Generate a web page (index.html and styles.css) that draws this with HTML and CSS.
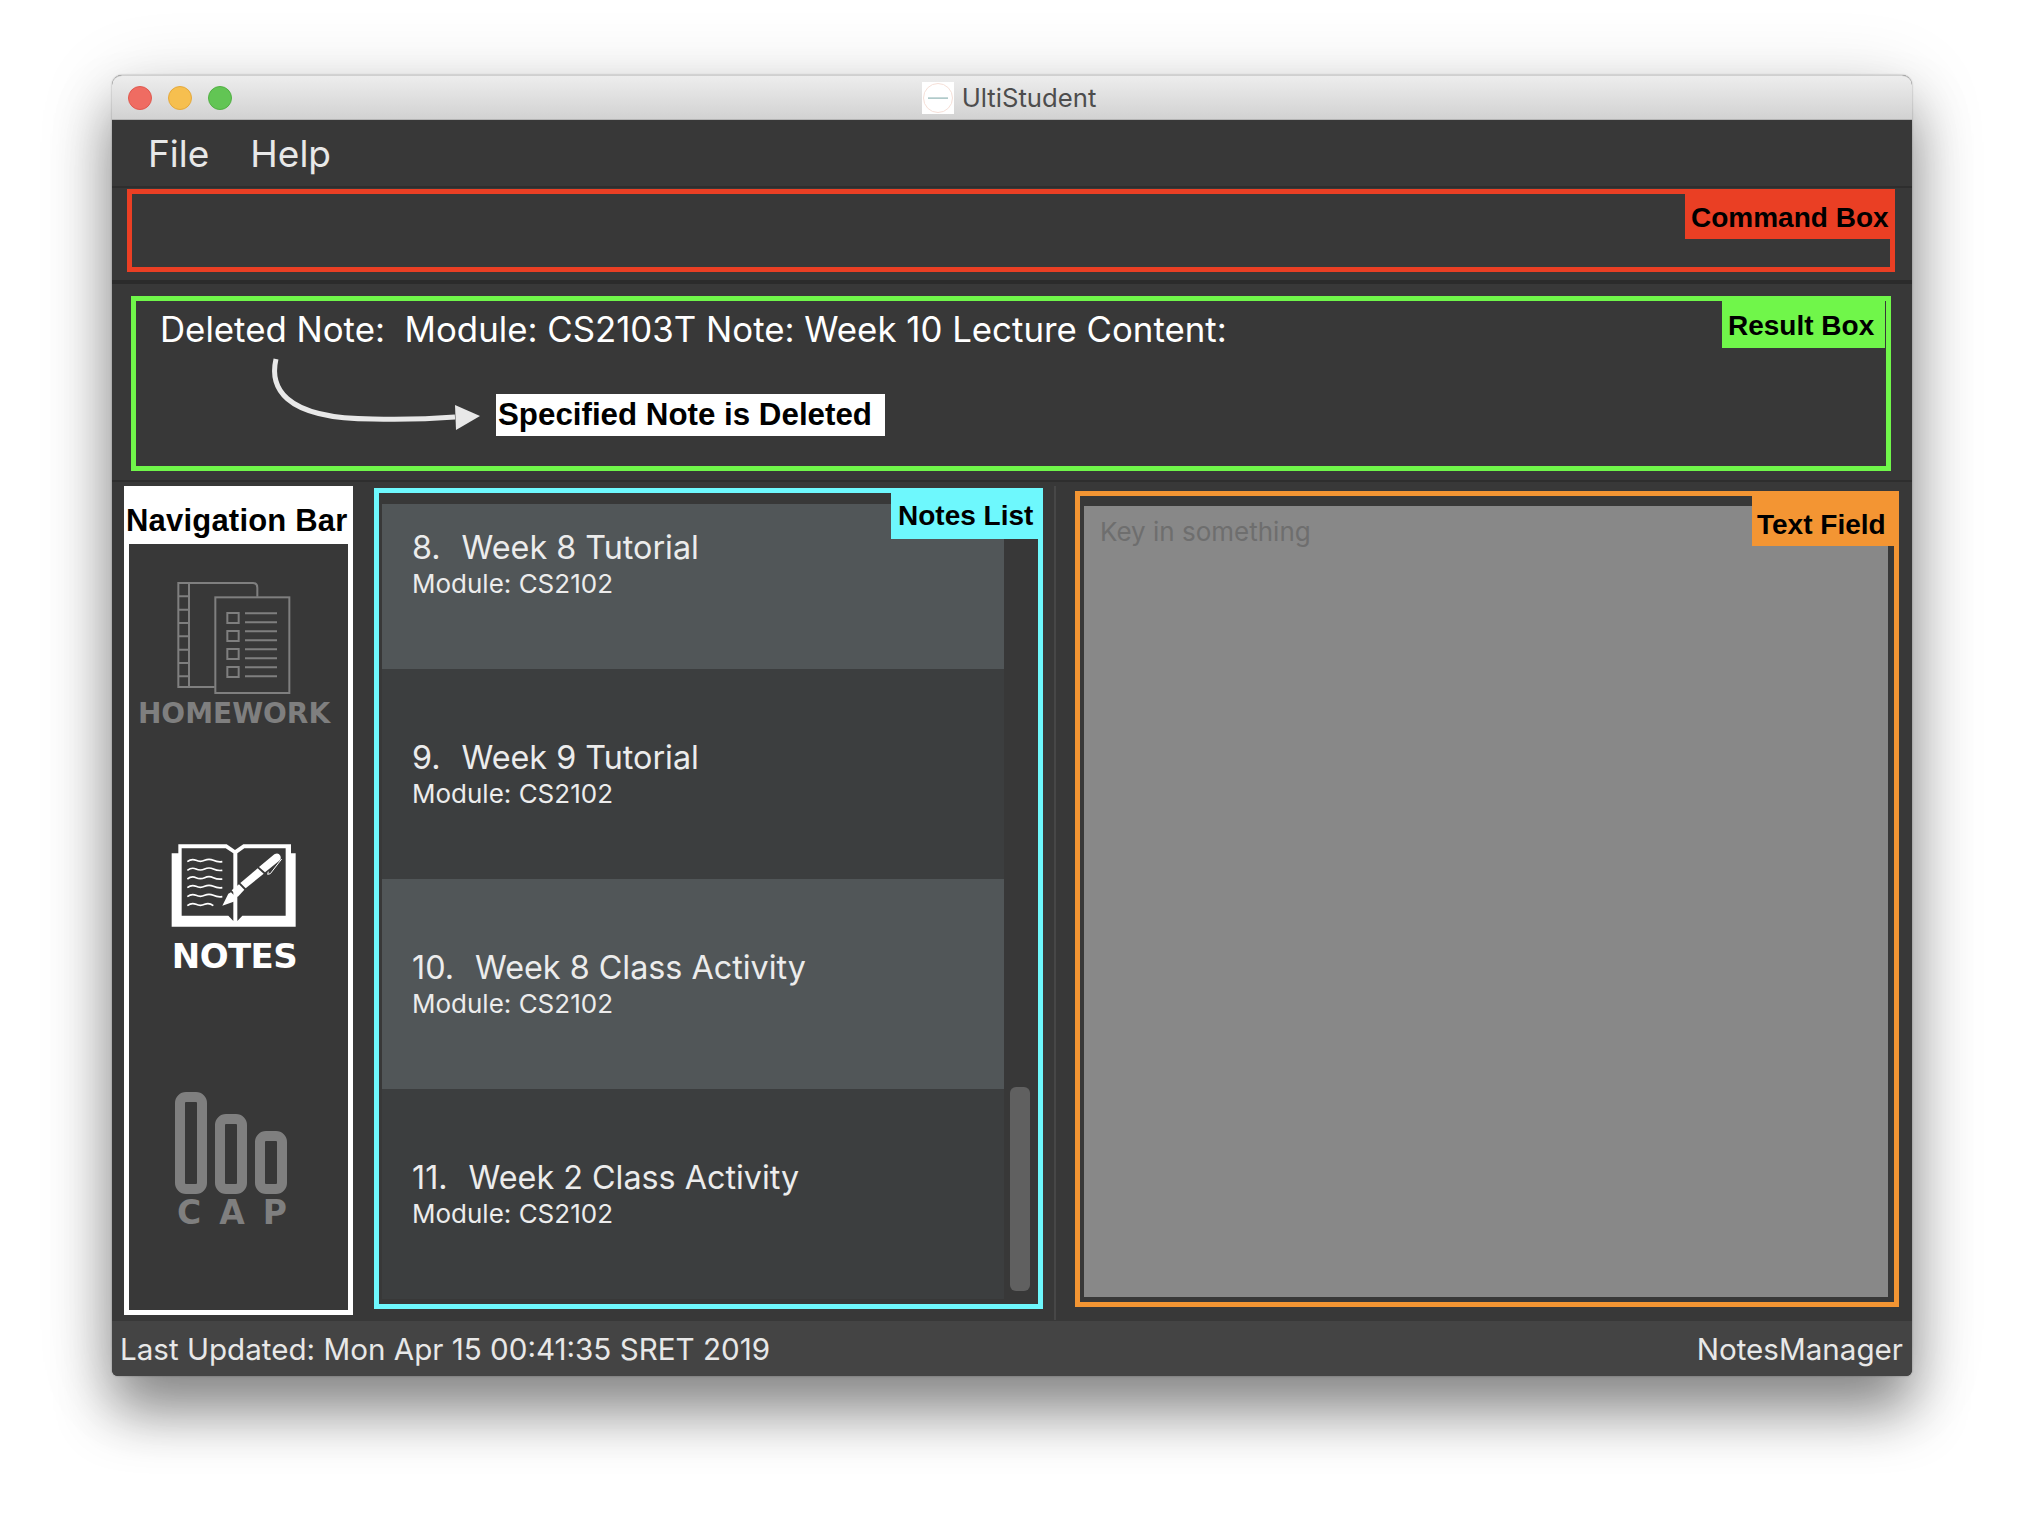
FILE: index.html
```html
<!DOCTYPE html>
<html lang="en">
<head>
    <meta charset="UTF-8">
    <title>UltiStudent</title>
    <link rel="stylesheet" href="styles.css">
</head>
<body>
    <div class="window">
        <div class="titlebar">
            <div class="lights">
                <span class="light red"></span>
                <span class="light yellow"></span>
                <span class="light green"></span>
            </div>
            <svg class="app-icon" viewBox="0 0 32 32">
                <rect width="32" height="32" fill="#fff"/>
                <circle cx="16" cy="16" r="14.5" fill="none" stroke="#f6e0d8" stroke-width="1"/>
                <rect x="6" y="15.5" width="20" height="1.2" fill="#8fb4b4"/>
            </svg>
            <span class="app-title">UltiStudent</span>
        </div>

        <div class="menubar">
            <span class="menu-item">File</span>
            <span class="menu-item">Help</span>
        </div>

        <div class="command-pane">
            <div class="box command-box">
                <span class="tag tag-command">Command Box</span>
            </div>
        </div>

        <div class="result-pane">
            <div class="box result-box">
                <div class="result-text">Deleted Note:&nbsp; Module: CS2103T Note: Week 10 Lecture Content:</div>
                <span class="tag tag-result">Result Box</span>
                <!-- annotation arrow -->
                <svg class="arrow" viewBox="0 0 230 90">
                    <path d="M10 4C4 30 14 64 107 64Q150 65 189 62" fill="none" stroke="#e8e8e8" stroke-width="5"/>
                    <polygon points="189,50 214,61 190,75" fill="#e8e8e8"/>
                </svg>
                <span class="callout">Specified Note is Deleted</span>
            </div>
        </div>

        <div class="main">
            <div class="nav">
                <div class="nav-head">Navigation Bar</div>
                <div class="nav-body">
                    <div class="nav-item item-homework">
                        <svg class="icon-homework" viewBox="200 300 342 342">
                            <g fill="none" stroke="#7f7f7f" stroke-width="6">
                                <path d="M313 618H204V306H428Q441 306 441 320V347"/>
                                <path d="M236 306V618M204 346H236M204 386H236M204 426H236M204 466H236M204 506H236M204 546H236M204 586H236"/>
                                <rect x="315" y="349" width="222" height="287"/>
                                <rect x="351" y="396" width="34" height="30"/>
                                <rect x="351" y="450" width="34" height="30"/>
                                <rect x="351" y="504" width="34" height="30"/>
                                <rect x="351" y="558" width="34" height="30"/>
                                <path d="M404 397H500M404 424H500M404 451H500M404 478H500M404 505H500M404 532H500M404 559H500M404 586H500"/>
                            </g>
                        </svg>
                        <span class="nav-label label-homework">HOMEWORK</span>
                    </div>
                    <div class="nav-item item-notes">
                        <svg class="icon-notes" viewBox="0 0 420 300">
                            <path d="M20 55H40V28H185L210 45L235 28H378V55H392V275H20Z" fill="#fff"/>
                            <path d="M50 40H182L205 55V258L190 242H50Z" fill="#383838"/>
                            <path d="M217 55L238 40H362V242H232L217 258Z" fill="#383838"/>
                            <g fill="none" stroke="#fff" stroke-width="5">
                                <path d="M67 80Q80 70 93 76T119 76T145 76T172 80"/>
                                <path d="M67 106Q80 96 93 102T119 102T145 102T172 106"/>
                                <path d="M67 132Q80 122 93 128T119 128T145 128T172 132"/>
                                <path d="M67 158Q80 148 93 154T119 154T145 154T172 158"/>
                                <path d="M67 185Q80 175 93 181T119 181T145 181T172 185"/>
                                <path d="M67 212Q80 202 93 208T119 208T145 212"/>
                            </g>
                            <polygon points="172,212 190,176 198,172 216,190 212,198" fill="#fff"/>
                            <polygon points="200,166 222,148 238,164 218,186" fill="#fff"/>
                            <polygon points="226,144 278,100 296,116 242,160" fill="#fff"/>
                            <path d="M282 96L328 58Q340 52 346 62Q350 72 342 78L300 112Z" fill="#fff"/>
                            <path d="M350 72L316 116L308 118L310 110" fill="none" stroke="#fff" stroke-width="3"/>
                        </svg>
                        <span class="nav-label label-notes">NOTES</span>
                    </div>
                    <div class="nav-item item-cap">
                        <svg class="icon-cap" viewBox="0 0 114 102">
                            <g fill="none" stroke="#7f7f7f" stroke-width="10">
                                <rect x="5" y="5" width="22" height="92" rx="6"/>
                                <rect x="45" y="27" width="22" height="70" rx="6"/>
                                <rect x="85" y="44" width="22" height="53" rx="6"/>
                            </g>
                        </svg>
                        <span class="nav-label label-cap">CAP</span>
                    </div>
                </div>
            </div>

            <div class="box notes-box">
                <div class="notes-list">
                    <div class="note-cell alt first">
                        <div class="note-title"><span class="note-num">8.</span>Week 8 Tutorial</div>
                        <div class="note-module">Module: CS2102</div>
                    </div>
                    <div class="note-cell">
                        <div class="note-title"><span class="note-num">9.</span>Week 9 Tutorial</div>
                        <div class="note-module">Module: CS2102</div>
                    </div>
                    <div class="note-cell alt">
                        <div class="note-title"><span class="note-num">10.</span>Week 8 Class Activity</div>
                        <div class="note-module">Module: CS2102</div>
                    </div>
                    <div class="note-cell">
                        <div class="note-title"><span class="note-num">11.</span>Week 2 Class Activity</div>
                        <div class="note-module">Module: CS2102</div>
                    </div>
                </div>
                <div class="scroll-track"><div class="scroll-thumb"></div></div>
                <span class="tag tag-notes">Notes List</span>
            </div>

            <div class="divider"></div>

            <div class="box text-box">
                <div class="text-area">Key in something</div>
                <span class="tag tag-text">Text Field</span>
            </div>
        </div>

        <div class="statusbar">
            <span>Last Updated: Mon Apr 15 00:41:35 SRET 2019</span>
            <span>NotesManager</span>
        </div>
    </div>
</body>
</html>
```

FILE: styles.css
```css
body {
    margin: 0;
    width: 2024px;
    height: 1524px;
    box-sizing: border-box;
    padding: 75px 0 0 112px;
    background: #fff;
    font-family: Inter, "Noto Sans", sans-serif;
}
.window {
    width: 1800px;
    height: 1301px;
    display: flex;
    flex-direction: column;
    background: #383838;
    border-radius: 10px 10px 6px 6px;
    box-shadow: 0 36px 56px rgba(0, 0, 0, 0.42), 0 10px 80px rgba(0, 0, 0, 0.14), 0 0 2px rgba(0, 0, 0, 0.35);
}

/* title bar */
.titlebar {
    height: 45px;
    flex: none;
    box-sizing: border-box;
    display: flex;
    align-items: center;
    justify-content: center;
    padding-right: 10px;
    position: relative;
    background: linear-gradient(#ededed, #d2d2d2);
    border-radius: 10px 10px 0 0;
    border-top: 1px solid #d0d0d0;
    border-bottom: 1px solid #b4b4b4;
}
.lights {
    position: absolute;
    left: 16px;
    top: 10px;
    display: flex;
    gap: 16px;
}
.light {
    width: 24px;
    height: 24px;
    border-radius: 50%;
    box-sizing: border-box;
}
.red { background: #ef6c62; border: 1px solid #e0594f; }
.yellow { background: #f6bf4f; border: 1px solid #e5a93c; }
.green { background: #62c554; border: 1px solid #52b044; }
.app-icon {
    width: 32px;
    height: 32px;
    margin: 0 8px 0 4px;
}
.app-title {
    font-size: 25.7px;
    color: #4d4d4d;
}

/* menu */
.menubar {
    height: 66px;
    flex: none;
    display: flex;
    align-items: center;
    gap: 41px;
    padding: 0 0 0 36px;
    box-sizing: border-box;
    font-size: 37px;
    color: #e8e8e8;
}

.box {
    position: relative;
    box-sizing: border-box;
    background: #383838;
}
.tag {
    position: absolute;
    box-sizing: border-box;
    font: bold 28px "Liberation Sans", Arial, sans-serif;
    color: #000;
    display: flex;
    align-items: center;
}

/* command box */
.command-pane {
    height: 98px;
    flex: none;
    box-sizing: border-box;
    padding: 1px 17px 8px 15px;
    border-top: 2px solid #2e2e2e;
    border-bottom: 4px solid #2b2b2b;
}
.command-box {
    height: 83px;
    border: 5px solid #ea3f24;
}
.tag-command {
    top: -5px;
    right: -5px;
    width: 210px;
    height: 50px;
    padding: 7px 0 0 6px;
    background: #ea3f24;
}

/* result box */
.result-pane {
    height: 198px;
    flex: none;
    box-sizing: border-box;
    padding: 12px 21px 0 19px;
    border-bottom: 2px solid #2e2e2e;
}
.result-box {
    height: 175px;
    border: 5px solid #70f64a;
}
.result-text {
    padding: 7px 0 0 24px;
    font-size: 34.8px;
    line-height: 42px;
    color: #fff;
}
.tag-result {
    top: 0;
    right: 1px;
    width: 163px;
    height: 47px;
    padding: 3px 0 0 6px;
    background: #70f64a;
}
.arrow {
    position: absolute;
    left: 130px;
    top: 54px;
    width: 230px;
    height: 90px;
}
.callout {
    position: absolute;
    left: 360px;
    top: 93px;
    width: 389px;
    height: 42px;
    box-sizing: border-box;
    padding: 0 0 0 2px;
    font: bold 31.3px/42px "Liberation Sans", Arial, sans-serif;
    color: #000;
    background: #fff;
}

/* main row */
.main {
    flex: 1;
    display: flex;
    align-items: flex-start;
    padding: 4px 0 0 12px;
    min-height: 0;
}
.nav {
    width: 229px;
    height: 829px;
    flex: none;
    box-sizing: border-box;
    border: 5px solid #fff;
    display: flex;
    flex-direction: column;
}
.nav-head {
    height: 53px;
    flex: none;
    box-sizing: border-box;
    padding-top: 5px;
    margin-left: -3px;
    background: #fff;
    color: #000;
    font: bold 31px/50px "Liberation Sans", Arial, sans-serif;
    letter-spacing: 0.2px;
    white-space: nowrap;
}
.nav-body {
    flex: 1;
    display: flex;
    flex-direction: column;
    align-items: center;
    padding: 37px 10px 0 0;
}
.nav-item {
    display: flex;
    flex-direction: column;
    align-items: center;
}
.item-homework { height: 263px; margin-left: 1px; }
.item-notes { height: 238px; margin: -9px 0 0 2px; }
.item-cap { height: 140px; margin: 19px 0 0 -3px; }
.icon-homework { width: 114px; height: 114px; }
.icon-notes { width: 140px; height: 100px; }
.icon-cap { width: 114px; height: 102px; }
.nav-label {
    font-family: "DejaVu Sans", sans-serif;
    font-weight: bold;
    line-height: 1;
    white-space: nowrap;
}
.label-homework {
    font-size: 28px;
    color: #7f7f7f;
    margin-top: 5px;
}
.label-notes {
    font-size: 34px;
    letter-spacing: -0.6px;
    color: #fff;
    margin-top: 4px;
}
.label-cap {
    font-size: 33px;
    color: #7f7f7f;
    letter-spacing: 18px;
    margin: 2px -18px 0 0;
}

/* notes list */
.notes-box {
    width: 669px;
    height: 821px;
    flex: none;
    margin: 2px 0 0 21px;
    border: 5px solid #6ef8fd;
    padding: 11px 0 6px 3px;
    display: flex;
}
.notes-list {
    width: 622px;
    flex: none;
}
.note-cell {
    height: 210px;
    box-sizing: border-box;
    padding: 69px 0 0 30px;
    background: #3c3e3f;
    color: #ececec;
}
.note-cell.alt { background: #515658; }
.note-cell.first { height: 165px; padding-top: 24px; }
.note-title {
    font-size: 32.3px;
    line-height: 40px;
}
.note-num {
    margin-right: 21px;
}
.note-module {
    font-size: 26px;
    line-height: 30px;
    margin-top: 1px;
}
.scroll-track {
    flex: 1;
    display: flex;
    align-items: flex-end;
    justify-content: center;
    padding: 0 8px 7px 6px;
}
.scroll-thumb {
    width: 20px;
    height: 204px;
    background: #606060;
    border-radius: 6px;
}
.tag-notes {
    top: -5px;
    right: -5px;
    width: 152px;
    height: 51px;
    padding: 5px 0 0 7px;
    background: #6ef8fd;
}

.divider {
    width: 2px;
    height: 834px;
    flex: none;
    margin-left: 11px;
    background: #474747;
}

/* text field */
.text-box {
    width: 824px;
    height: 816px;
    flex: none;
    margin: 5px 0 0 19px;
    border: 5px solid #f39533;
    padding: 10px 6px 5px 4px;
}
.text-area {
    height: 100%;
    box-sizing: border-box;
    padding: 9px 0 0 16px;
    background: #888;
    color: #6e6e6e;
    font-size: 26px;
    line-height: 34px;
}
.tag-text {
    top: -5px;
    right: -3px;
    width: 145px;
    height: 55px;
    padding: 13px 0 0 5px;
    background: #f39533;
}

/* status bar */
.statusbar {
    height: 55px;
    flex: none;
    box-sizing: border-box;
    display: flex;
    align-items: center;
    justify-content: space-between;
    padding: 0 9px 0 8px;
    background: #444;
    color: #e8e8e8;
    font-size: 29.6px;
    border-radius: 0 0 6px 6px;
}
```
